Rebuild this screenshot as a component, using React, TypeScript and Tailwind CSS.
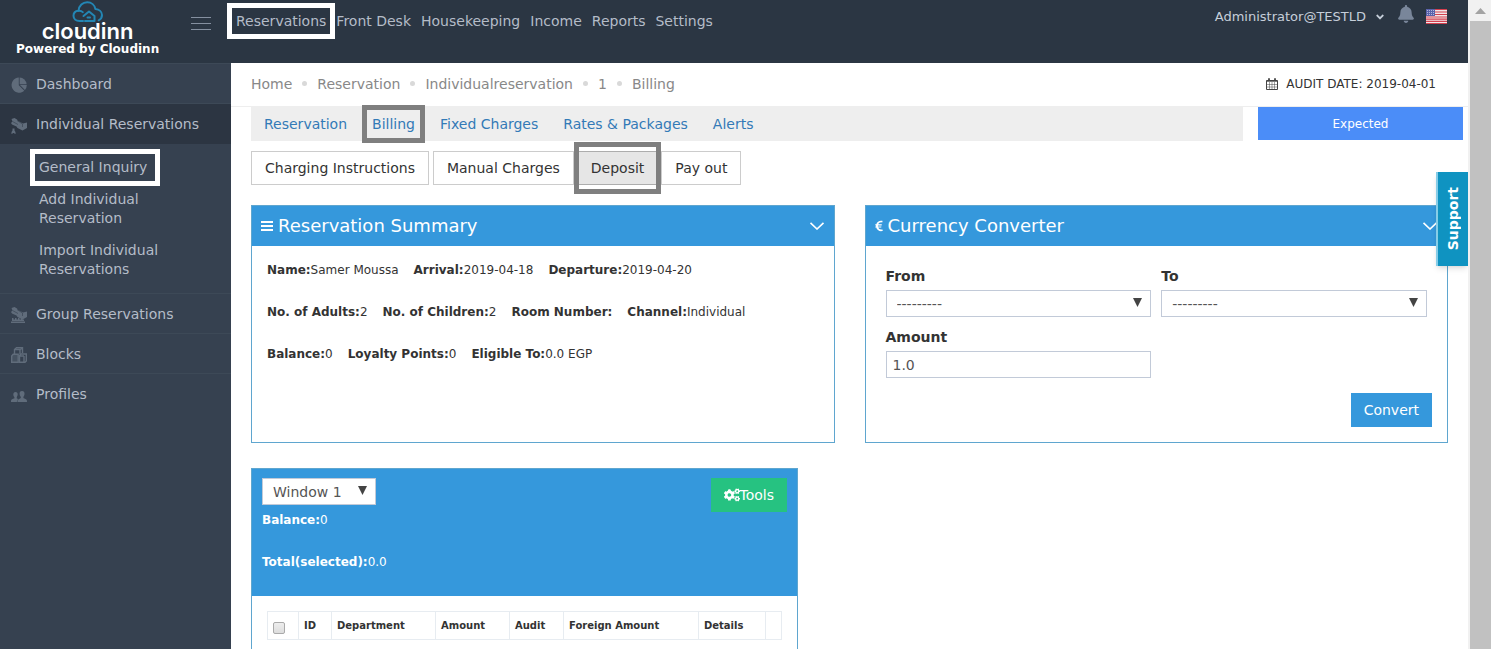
import type { ReactNode } from 'react';
import { FaAngleDown, FaBell, FaCogs, FaEuroSign } from 'react-icons/fa';

const topMenu = [
  'Reservations',
  'Front Desk',
  'Housekeeping',
  'Income',
  'Reports',
  'Settings',
];

const subMenu = [
  'General Inquiry',
  'Add Individual Reservation',
  'Import Individual Reservations',
];

const breadcrumbs = [
  'Home',
  'Reservation',
  'Individualreservation',
  '1',
  'Billing',
];

const tabs = [
  'Reservation',
  'Billing',
  'Fixed Charges',
  'Rates & Packages',
  'Alerts',
];

const billingActions = [
  'Charging Instructions',
  'Manual Charges',
  'Deposit',
  'Pay out',
];

const summaryRows = [
  [
    { label: 'Name:', value: 'Samer Moussa' },
    { label: 'Arrival:', value: '2019-04-18' },
    { label: 'Departure:', value: '2019-04-20' },
  ],
  [
    { label: 'No. of Adults:', value: '2' },
    { label: 'No. of Children:', value: '2' },
    { label: 'Room Number:', value: '' },
    { label: 'Channel:', value: 'Individual' },
  ],
  [
    { label: 'Balance:', value: '0' },
    { label: 'Loyalty Points:', value: '0' },
    { label: 'Eligible To:', value: '0.0 EGP' },
  ],
];

const columns = [
  { title: 'ID', width: 'w-[33px]' },
  { title: 'Department', width: 'w-[104px]' },
  { title: 'Amount', width: 'w-[74px]' },
  { title: 'Audit', width: 'w-[54px]' },
  { title: 'Foreign Amount', width: 'w-[135px]' },
  { title: 'Details', width: 'w-[67px]' },
];

function CloudLogo() {
  return (
    <svg
      className="h-6 w-8"
      viewBox="0 0 32 24"
      fill="none"
      stroke="#2386b4"
      strokeWidth="2"
      strokeLinecap="round"
      strokeLinejoin="round"
    >
      <path d="M11 20H7.500C3.800 20 1.500 17.800 1.500 14.800c0-2.800 2-4.900 5-5.100C7 4.500 10.700 1.300 15.200 1.300c4.300 0 7.500 2.800 8.200 6.800 3.800.300 6.600 2.700 6.600 6 0 2.300-1.200 4.200-3.300 5.200" />
      <path d="M6.500 9.700c1.800-.200 3.200.300 4.300 1.400" />
      <path d="M11.500 15l5.500-4.500 5.500 4.500v5H13" />
      <path d="M15.500 16.500h2.500" />
    </svg>
  );
}

function PieIcon() {
  return (
    <svg className="size-4" viewBox="0 0 16 16" fill="#606c7b">
      <path d="M7.800.500V8.300l5.500 5.400A7.600 7.600 0 1 1 7.800.500z" />
      <path d="M8.600.500a7.400 7.400 0 0 1 7 6.800H8.600z" />
      <path d="M9 8h6.800a7.600 7.600 0 0 1-1.900 4.900z" />
    </svg>
  );
}

function BedIcon({ group = false }: { group?: boolean }) {
  return (
    <svg className="size-4" viewBox="0 0 16 16" fill="#606c7b">
      <path d="M.500 1l3-1 2.500 1.500 1 1.500 5 2.500L16 4.500V10l-4.500 2.500-5-2.500-1-1.500L1 6.500 0 5l1.500-1.500z" />
      <path d="M1.500 3.500l5.500 3M6 2.500l5.500 3.500v3" fill="none" stroke="#3b4654" strokeWidth=".7" />
      {group ? (
        <path d="M1 11h1.500v1.500H4V11h1.500v1.500H7V11h1.500v1.500H10V11h1.500v1.500H13V14H1zM0 14.500h14V16H0z" />
      ) : (
        <path d="M1.500 10.500h2v2l1 1.500V16H3.500v-1h-2v1H.500v-2l1-1.500z" />
      )}
    </svg>
  );
}

function BlocksIcon() {
  return (
    <svg className="size-4" viewBox="0 0 16 16" fill="none" stroke="#606c7b" strokeWidth="1.400">
      <path d="M3.500 7V2.500L5.500.700h6V6" />
      <path d="M4 2.500h5V7M9.500 2.500l2-1.800" />
      <path d="M.700 9l1.500-1.700h5V15.300H.700z" fill="#606c7b" fillOpacity=".4" />
      <path d="M8.500 8.500L10 7h5.300v7L14 15.300H8.500zM13 9v6M8.500 9H13" />
    </svg>
  );
}

function PeopleIcon() {
  return (
    <svg className="size-4" viewBox="0 0 16 16" fill="#606c7b">
      <path d="M4.500 4c1.500 0 2.300 1 2.200 2.500-.1 1.300-.6 2-.9 2.500l-.1 1.200 1.300.8L5.800 14H0c0-2 .2-2.500 1.500-3l2-.8L3.300 9c-.5-.6-1-1.300-1-2.500C2.300 5 3 4 4.500 4z" />
      <path d="M11 3c1.800 0 2.700 1.200 2.500 3-.1 1.400-.7 2.200-1 2.700l-.1 1.300 2.100.9c1.300.6 1.500 1.100 1.500 3.100H6.500c0-2 .3-2.500 1.600-3.100L9.800 10l-.1-1.300c-.4-.5-1-1.300-1.100-2.700C8.400 4.200 9.300 3 11 3z" />
    </svg>
  );
}

function CalendarIcon() {
  return (
    <svg className="size-3" viewBox="0 0 12 12" fill="none" stroke="#444" strokeWidth="1">
      <path d="M.5 2.500h11v9H.5z" />
      <path d="M.5 3.200h11" />
      <path d="M.5 6.500h11M.5 9h11M3.500 4v7.500M6 4v7.500M8.500 4v7.500" strokeWidth=".5" />
      <path d="M3 .3v2.500M9 .3v2.500" strokeWidth="1.800" />
    </svg>
  );
}

function FlagIcon() {
  return (
    <svg className="h-[15px] w-[21px]" viewBox="0 0 21 15">
      <rect width="21" height="15" fill="#f3e6e8" />
      <path
        d="M0 .5h21M0 3h21M0 5.500h21M0 8h21M0 10.200h21M0 12.400h21M0 14.500h21"
        stroke="#d3404f"
        strokeWidth="1.200"
      />
      <rect width="9" height="7" fill="#5a62ab" />
      <path
        d="M1 1.500h7M1 3.500h7M1 5.500h7"
        stroke="#c9cce6"
        strokeWidth=".8"
        strokeDasharray="1 1"
      />
    </svg>
  );
}

function BarsIcon() {
  return (
    <svg className="h-[10px] w-3" viewBox="0 0 12 10" fill="#fff">
      <path d="M0 0h12v2H0zM0 4h12v2H0zM0 8h12v2H0z" />
    </svg>
  );
}

function Chevron() {
  return (
    <svg className="h-2 w-4" viewBox="0 0 16 8" fill="none" stroke="#fff" strokeWidth="1.600">
      <path d="M1.500.800L8 7l6.500-6.200" />
    </svg>
  );
}

function SelectBox({ id, options }: { id: string; options: string[] }) {
  return (
    <div className="relative">
      <select
        id={id}
        aria-label={id}
        className="block h-[27px] w-full appearance-none border border-[#c2cad8] bg-white pr-6 pl-[10px] text-sm text-[#555]"
      >
        {options.map(option => (
          <option key={option}>{option}</option>
        ))}
      </select>
      <svg
        className="pointer-events-none absolute top-2 right-[9px] h-[9px] w-[9px]"
        viewBox="0 0 9 9"
        fill="#444"
      >
        <path d="M0 0h9L4.500 9z" />
      </svg>
    </div>
  );
}

function SidebarItem({
  icon,
  label,
  active = false,
}: {
  icon: ReactNode;
  label: string;
  active?: boolean;
}) {
  return (
    <a
      href="#"
      className={`flex h-10 items-center gap-[9px] pl-[11px] text-sm ${
        active ? 'bg-[#2c3542]' : ''
      }`}
    >
      <span className="pt-[3px]">{icon}</span>
      {label}
    </a>
  );
}

function Panel({
  icon,
  title,
  children,
}: {
  icon: ReactNode;
  title: string;
  children: ReactNode;
}) {
  return (
    <section className="border border-[#5fa6cf] bg-white">
      <div className="flex h-10 items-center bg-[#3598dc] px-[9px] text-white">
        {icon}
        <h2 className="ml-[5px] flex-1 text-lg font-normal">{title}</h2>
        <button type="button" aria-label={`Collapse ${title}`}>
          <Chevron />
        </button>
      </div>
      {children}
    </section>
  );
}

function Header() {
  return (
    <header className="flex h-[63px] shrink-0 items-start bg-[#2b3643] text-[#b4bcc8]">
      <div className="flex w-[231px] shrink-0 items-start justify-between pr-5 pl-4">
        <a href="#" className="flex flex-col items-center pt-px">
          <CloudLogo />
          <span className="-mt-1 font-['Inter'] text-[22px] leading-5 font-semibold text-white">
            cloudinn
          </span>
          <span className="text-xs leading-4 font-bold whitespace-nowrap text-white">
            Powered by Cloudinn
          </span>
        </a>
        <button
          type="button"
          aria-label="Toggle menu"
          className="mt-[17px] flex w-5 flex-col gap-[5px]"
        >
          <span className="h-px w-full bg-[#8590a0]" />
          <span className="h-px w-full bg-[#8590a0]" />
          <span className="h-px w-full bg-[#8590a0]" />
        </button>
      </div>
      <nav className="ml-[5px] flex flex-1 gap-[10px] pt-3 text-sm leading-[18px]">
        {topMenu.map(item => (
          <a
            key={item}
            href="#"
            className={
              item === 'Reservations'
                ? 'outline-5 outline-offset-4 outline-white'
                : ''
            }
          >
            {item}
          </a>
        ))}
      </nav>
      <div className="flex items-start pr-[21px]">
        <button
          type="button"
          className="mt-2 flex items-center gap-2 text-[13px] leading-[18px] text-[#c6cfda]"
        >
          Administrator@TESTLD
          <FaAngleDown className="size-3" />
        </button>
        <button
          type="button"
          aria-label="Notifications"
          className="mt-[5px] ml-3 text-[#79869a]"
        >
          <FaBell className="h-[18px] w-4" />
        </button>
        <button type="button" aria-label="Language" className="mt-[9px] ml-3">
          <FlagIcon />
        </button>
      </div>
    </header>
  );
}

function Sidebar() {
  return (
    <aside className="w-[231px] shrink-0 divide-y divide-[#3d4957] border-t border-[#3d4957] bg-[#364150] text-[#b4bcc8]">
      <SidebarItem icon={<PieIcon />} label="Dashboard" />
      <div>
        <SidebarItem
          icon={<BedIcon />}
          label="Individual Reservations"
          active
        />
        <ul className="flex flex-col gap-[13px] py-[14px] pr-2 pl-[39px] text-sm leading-[19px]">
          {subMenu.map(item => (
            <li key={item}>
              <a
                href="#"
                className={
                  item === 'General Inquiry'
                    ? 'inline-block pr-1 outline-5 outline-offset-4 outline-white'
                    : 'block'
                }
              >
                {item}
              </a>
            </li>
          ))}
        </ul>
      </div>
      <SidebarItem icon={<BedIcon group />} label="Group Reservations" />
      <SidebarItem icon={<BlocksIcon />} label="Blocks" />
      <SidebarItem icon={<PeopleIcon />} label="Profiles" />
    </aside>
  );
}

function CurrencyForm() {
  return (
    <form className="text-sm leading-[18px] text-[#333]">
      <div className="grid grid-cols-2 gap-x-[10px] gap-y-[11px] px-5 pt-[21px]">
        <div>
          <label htmlFor="From" className="mb-[5px] block font-bold">
            From
          </label>
          <SelectBox id="From" options={['---------']} />
        </div>
        <div>
          <label htmlFor="To" className="mb-[5px] block font-bold">
            To
          </label>
          <SelectBox id="To" options={['---------']} />
        </div>
        <div>
          <label htmlFor="Amount" className="mb-[5px] block font-bold">
            Amount
          </label>
          <input
            id="Amount"
            defaultValue="1.0"
            className="block h-[27px] w-full border border-[#c2cad8] px-[6px] text-[#555]"
          />
        </div>
      </div>
      <div className="flex justify-end p-[15px]">
        <button
          type="button"
          className="h-[34px] bg-[#3598dc] px-[13px] text-white"
        >
          Convert
        </button>
      </div>
    </form>
  );
}

function WindowPanel() {
  return (
    <section className="w-fit border border-[#5fa6cf] bg-white">
      <div className="flex h-[127px] items-start justify-between bg-[#3598dc] px-[10px] pt-[9px] text-xs leading-[18px] text-white">
        <div>
          <div className="w-[114px]">
            <SelectBox id="Window" options={['Window 1']} />
          </div>
          <p className="mt-[6px]">
            <b>Balance:</b>0
          </p>
          <p className="mt-6">
            <b>Total(selected):</b>0.0
          </p>
        </div>
        <button
          type="button"
          className="flex h-[34px] items-center bg-[#26c281] px-[13px] text-sm"
        >
          <FaCogs className="size-4" />
          Tools
        </button>
      </div>
      <div className="px-[15px] pt-[15px] pb-10">
        <table className="table-fixed border-collapse text-left text-[10px] leading-[14px] text-[#333]">
          <thead>
            <tr className="h-7">
              <th className="w-[31px] border border-[#e7ecf1] pl-[5px]">
                <input
                  type="checkbox"
                  aria-label="Select all"
                  className="mt-1 block size-3 appearance-none rounded-xs border border-[#aaa] bg-linear-to-b from-[#eee] to-[#ddd]"
                />
              </th>
              {columns.map(column => (
                <th
                  key={column.title}
                  className={`border border-[#e7ecf1] px-[5px] whitespace-nowrap ${column.width}`}
                >
                  {column.title}
                </th>
              ))}
              <th className="w-4 border border-[#e7ecf1]" />
            </tr>
          </thead>
        </table>
      </div>
    </section>
  );
}

function Content() {
  return (
    <main className="min-w-0 flex-1 bg-white">
      <div className="flex h-11 items-center justify-between border-b border-[#eee] pr-8 pb-[2px] pl-5">
        <ol className="flex items-center gap-[10px] text-sm text-[#888]">
          {breadcrumbs.map((crumb, index) => (
            <li key={crumb} className="flex items-center gap-[10px]">
              {index > 0 ? (
                <span className="size-[5px] rounded-full bg-[#d9d9d9]" />
              ) : null}
              <a href="#">{crumb}</a>
            </li>
          ))}
        </ol>
        <div className="flex items-center gap-2 text-xs text-[#333]">
          <CalendarIcon />
          AUDIT DATE: 2019-04-01
        </div>
      </div>

      <div className="flex gap-[15px] pr-[5px] pl-5">
        <nav className="flex h-[34px] flex-1 items-center gap-[25px] bg-[#eee] pl-[13px] text-sm leading-[18px] text-[#337ab7]">
          {tabs.map(tab => (
            <a
              key={tab}
              href="#"
              className={
                tab === 'Billing'
                  ? 'outline-5 outline-offset-5 outline-[#7f7f7f]'
                  : ''
              }
            >
              {tab}
            </a>
          ))}
        </nav>
        <button
          type="button"
          className="h-[33px] w-[205px] bg-[#4b8df8] text-xs font-medium text-white"
        >
          Expected
        </button>
      </div>

      <div className="px-5">
        <div className="mt-[10px] flex gap-1 text-sm text-[#333]">
          {billingActions.map(action =>
            action === 'Deposit' ? (
              <div key={action} className="relative z-10">
                <button
                  type="button"
                  className="h-[34px] border border-[#adadad] bg-[#e6e6e6] px-3"
                >
                  {action}
                </button>
                <span className="pointer-events-none absolute -inset-x-1 -inset-y-[9px] border-5 border-[#7f7f7f]" />
              </div>
            ) : (
              <button
                key={action}
                type="button"
                className="h-[34px] border border-[#ccc] bg-white px-[13px]"
              >
                {action}
              </button>
            ),
          )}
        </div>

        <div className="mt-5 grid grid-cols-2 gap-[30px]">
          <Panel icon={<BarsIcon />} title="Reservation Summary">
            <div className="flex flex-col gap-6 px-[15px] pt-[15px] text-xs leading-[18px] text-[#333]">
              {summaryRows.map(row => (
                <div key={row[0].label} className="flex gap-[15px]">
                  {row.map(({ label, value }) => (
                    <p key={label}>
                      <b>{label}</b>
                      {value}
                    </p>
                  ))}
                </div>
              ))}
            </div>
          </Panel>
          <Panel
            icon={<FaEuroSign className="h-3 w-2" />}
            title="Currency Converter"
          >
            <CurrencyForm />
          </Panel>
        </div>

        <div className="mt-[25px]">
          <WindowPanel />
        </div>
      </div>
    </main>
  );
}

function ScrollTrack() {
  return (
    <div className="flex w-[23px] shrink-0 flex-col border-l-2 border-[#f1f1f1] bg-[#c1c1c1]">
      <div className="flex h-[21px] items-center justify-center bg-[#f1f1f1]">
        <svg className="h-[6px] w-[11px]" viewBox="0 0 11 6" fill="#a3a3a3">
          <path d="M0 6h11L5.500 0z" />
        </svg>
      </div>
    </div>
  );
}

function App() {
  return (
    <div className="flex h-screen overflow-hidden font-['DejaVu_Sans',Verdana,sans-serif]">
      <div className="relative flex min-w-0 flex-1 flex-col overflow-hidden">
        <Header />
        <div className="flex min-h-0 flex-1">
          <Sidebar />
          <Content />
        </div>
        <a
          href="#"
          className="absolute top-[172px] right-0 z-20 flex h-[94px] w-8 items-center justify-center border-l-2 border-[#86cde8] bg-[#0f93c1] shadow-md"
        >
          <span className="rotate-180 text-sm font-bold text-white [writing-mode:vertical-rl]">
            Support
          </span>
        </a>
      </div>
      <ScrollTrack />
    </div>
  );
}

export default App;
